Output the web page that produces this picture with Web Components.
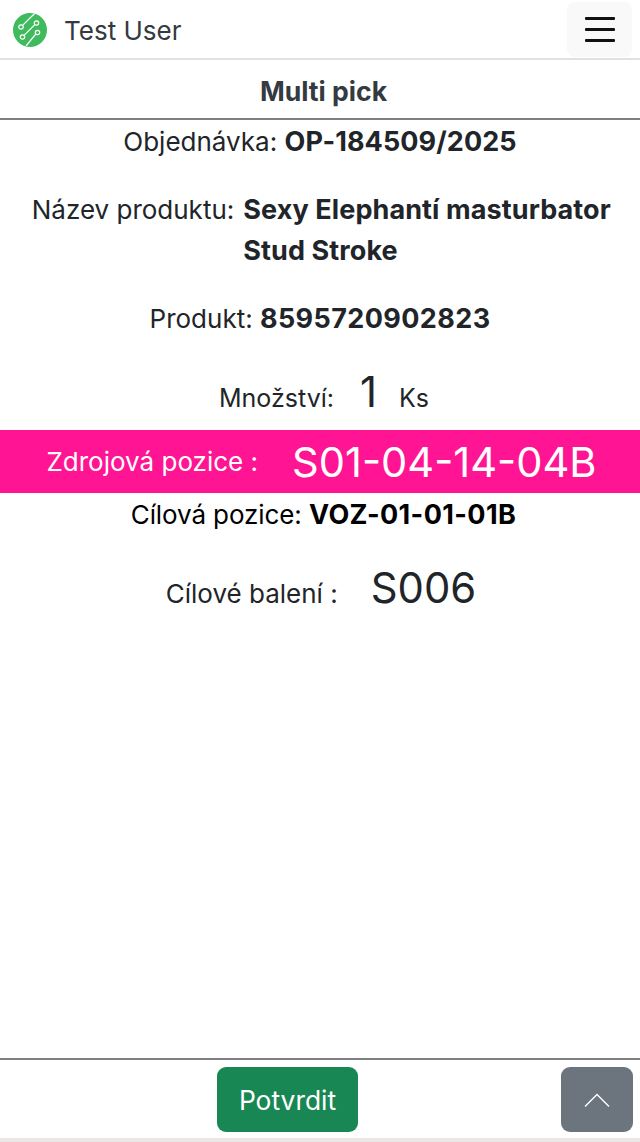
<!DOCTYPE html>
<html lang="cs">
<head>
<meta charset="utf-8">
<title>Multi pick</title>
<style>
  html, body { margin: 0; height: 100%; }
  body {
    font-family: Inter, "Noto Sans", sans-serif;
    color: #212529;
    background: #fff;
  }
  #app { display: flex; flex-direction: column; height: 1142px; overflow: hidden; }
</style>
</head>
<body>
<div id="app">
  <app-navbar name="Test User"></app-navbar>
  <page-title>Multi pick</page-title>
  <pick-detail></pick-detail>
  <app-footer></app-footer>
</div>
<script>
class AppNavbar extends HTMLElement {
  connectedCallback() {
    this.attachShadow({ mode: 'open' });
    this.shadowRoot.innerHTML = `
      <style>
        :host {
          display: flex;
          align-items: center;
          justify-content: space-between;
          height: 58px;
          padding: 0 8px 0 13px;
          border-bottom: 2px solid #dee2e6;
          flex: none;
        }
        .brand { display: flex; align-items: center; gap: 17px; }
        .brand span { font-size: 26px; color: #343a40; padding-top: 3px; }
        svg.logo { width: 34px; height: 34px; display: block; margin-top: 2px; }
        button {
          width: 65px;
          height: 55px;
          margin-top: 1px;
          border: 0;
          border-radius: 8px;
          background: #f9f9f9;
          display: flex;
          flex-direction: column;
          align-items: center;
          justify-content: center;
          gap: 8px;
          padding: 0;
        }
        button i { display: block; width: 30px; height: 3px; background: #111; border-radius: 1px; }
      </style>
      <div class="brand">
        <svg class="logo" viewBox="0 0 34 34" fill="none" stroke="#fff" stroke-width="1.2">
          <circle cx="17" cy="17" r="17" fill="#3fbb5e" stroke="none"/>
          <circle cx="8" cy="14" r="2.2"/>
          <path d="M9.6 12.4 L18 4 L21.5 .8"/>
          <circle cx="23.5" cy="10" r="2.2"/>
          <circle cx="9.5" cy="24" r="2.2"/>
          <path d="M11 22.4 L21.9 11.6"/>
          <circle cx="24.5" cy="19.5" r="2.2"/>
          <path d="M22.8 21 L13 33"/>
        </svg>
        <span>${this.getAttribute('name')}</span>
      </div>
      <button aria-label="Menu"><i></i><i></i><i></i></button>
    `;
  }
}
customElements.define('app-navbar', AppNavbar);

class PageTitle extends HTMLElement {
  connectedCallback() {
    this.attachShadow({ mode: 'open' });
    this.shadowRoot.innerHTML = `
      <style>
        :host {
          display: flex;
          align-items: center;
          justify-content: center;
          box-sizing: border-box;
          height: 60px;
          padding: 3px 0 0 7px;
          flex: none;
          border-bottom: 2px solid #7f7f7f;
          font-size: 26.6px;
          font-weight: 700;
          color: #343a40;
        }
      </style>
      <slot></slot>
    `;
  }
}
customElements.define('page-title', PageTitle);

class PickRow extends HTMLElement {
  connectedCallback() {
    this.attachShadow({ mode: 'open' });
    this.shadowRoot.innerHTML = `
      <style>
        :host {
          display: block;
          text-align: center;
          font-size: 26px;
          line-height: 41px;
          padding: 0 24px;
        }
      </style>
      <slot></slot>
    `;
  }
}
customElements.define('pick-row', PickRow);

class PickDetail extends HTMLElement {
  connectedCallback() {
    this.attachShadow({ mode: 'open' });
    this.shadowRoot.innerHTML = `
      <style>
        :host { display: block; flex: 1; min-height: 0; padding-top: 1px; }
        pick-row { margin-bottom: 27px; }
        b { font-weight: 700; font-size: 27px; letter-spacing: .1px; }
        .digits { letter-spacing: .4px; }
        .wrap { display: flex; justify-content: center; gap: 9px; text-align: left; padding-left: 5px; }
        .wrap span { flex: none; }
        .wrap b { flex: none; width: 370px; }
        .qty { display: flex; align-items: baseline; justify-content: center; font-size: 25px; padding: 1px 0 11px 8px; }
        .big { font-size: 41.8px; line-height: 50px; margin: 0 22px 0 26px; }
        .source {
          display: flex;
          align-items: center;
          justify-content: center;
          height: 63px;
          padding-left: 3px;
          background: #ff1493;
          color: #fff;
          font-size: 26px;
          white-space: nowrap;
        }
        .source strong { font-weight: 400; font-size: 41.6px; margin-left: 34px; }
        .target { color: #000; margin: 0; padding: 1px 24px 0 31px; letter-spacing: -.1px; }
        .target b { letter-spacing: .4px; }
        .pack { display: flex; align-items: baseline; justify-content: center; margin: 28px 0 0 2px; }
        .pack strong { font-weight: 400; font-size: 41.8px; line-height: 50px; margin-left: 33px; }
      </style>
      <pick-row>Objednávka: <b>OP-184509/2025</b></pick-row>
      <pick-row><div class="wrap"><span>Název produktu:</span><b>Sexy Elephantí masturbator Stud Stroke</b></div></pick-row>
      <pick-row>Produkt: <b class="digits">8595720902823</b></pick-row>
      <pick-row style="margin:0"><div class="qty">Množství:<span class="big">1</span>Ks</div></pick-row>
      <div class="source">Zdrojová pozice :<strong>S01-04-14-04B</strong></div>
      <pick-row class="target">Cílová pozice: <b>VOZ-01-01-01B</b></pick-row>
      <pick-row style="margin:0"><div class="pack">Cílové balení :<strong>S006</strong></div></pick-row>
    `;
  }
}
customElements.define('pick-detail', PickDetail);

class AppFooter extends HTMLElement {
  connectedCallback() {
    this.attachShadow({ mode: 'open' });
    this.shadowRoot.innerHTML = `
      <style>
        :host {
          display: block;
          flex: none;
          box-sizing: border-box;
          height: 84px;
          border-top: 2px solid #7f7f7f;
          border-bottom: 4px solid #ebe6e6;
          position: relative;
        }
        .bar { display: flex; justify-content: center; padding: 7px 65px 0 0; }
        button { border: 0; font-family: inherit; color: #fff; border-radius: 9px; }
        .ok {
          width: 141px;
          height: 65px;
          background: #198754;
          font-size: 26.4px;
          padding: 0;
        }
        .top {
          position: absolute;
          right: 7px;
          top: 7px;
          width: 72px;
          height: 65px;
          background: #6c757d;
          display: flex;
          align-items: center;
          justify-content: center;
          padding: 0;
        }
        .top svg { width: 26px; height: 16px; display: block; }
      </style>
      <div class="bar"><button class="ok">Potvrdit</button></div>
      <button class="top" aria-label="Nahoru">
        <svg viewBox="0 0 26 16" fill="none" stroke="#fff" stroke-width="1.4"><path d="M1 14.5 L13 2.5 L25 14.5"/></svg>
      </button>
    `;
  }
}
customElements.define('app-footer', AppFooter);
</script>
</body>
</html>
